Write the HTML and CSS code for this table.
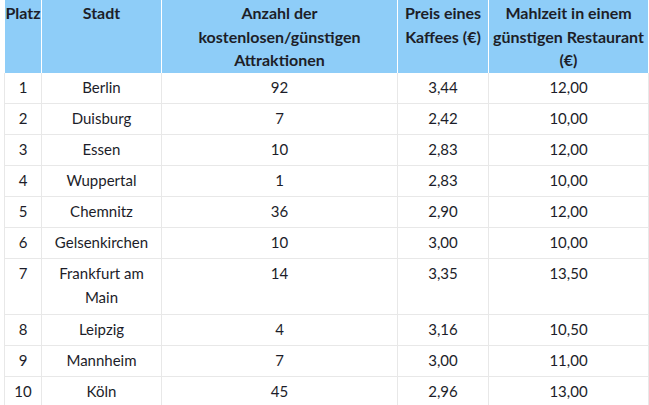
FILE: index.html
```
<!DOCTYPE html>
<html lang="de">
<head>
<meta charset="utf-8">
<title>Städte-Ranking</title>
<link rel="stylesheet" href="styles.css">
</head>
<body>
<table class="ranking">
  <colgroup>
    <col class="c-rank">
    <col class="c-city">
    <col class="c-attr">
    <col class="c-coffee">
    <col class="c-meal">
  </colgroup>
  <thead>
    <tr>
      <th class="rank">Platz</th>
      <th>Stadt</th>
      <th>Anzahl der kostenlosen/günstigen Attraktionen</th>
      <th>Preis eines Kaffees (€)</th>
      <th class="last">Mahlzeit in einem günstigen Restaurant (€)</th>
    </tr>
  </thead>
  <tbody>
    <tr><td class="rank">1</td><td>Berlin</td><td>92</td><td>3,44</td><td class="last">12,00</td></tr>
    <tr><td class="rank">2</td><td>Duisburg</td><td>7</td><td>2,42</td><td class="last">10,00</td></tr>
    <tr><td class="rank">3</td><td>Essen</td><td>10</td><td>2,83</td><td class="last">12,00</td></tr>
    <tr><td class="rank">4</td><td>Wuppertal</td><td>1</td><td>2,83</td><td class="last">10,00</td></tr>
    <tr><td class="rank">5</td><td>Chemnitz</td><td>36</td><td>2,90</td><td class="last">12,00</td></tr>
    <tr><td class="rank">6</td><td>Gelsenkirchen</td><td>10</td><td>3,00</td><td class="last">10,00</td></tr>
    <tr class="tall"><td class="rank">7</td><td>Frankfurt am Main</td><td>14</td><td>3,35</td><td class="last">13,50</td></tr>
    <tr><td class="rank">8</td><td>Leipzig</td><td>4</td><td>3,16</td><td class="last">10,50</td></tr>
    <tr><td class="rank">9</td><td>Mannheim</td><td>7</td><td>3,00</td><td class="last">11,00</td></tr>
    <tr><td class="rank">10</td><td>Köln</td><td>45</td><td>2,96</td><td class="last">13,00</td></tr>
  </tbody>
</table>
</body>
</html>
```

FILE: styles.css
```
html, body {
  margin: 0;
  padding: 0;
  background: #ffffff;
}

body {
  font-family: Lato, "Open Sans", sans-serif;
  color: #1c1d29;
}

.ranking {
  margin: 0 0 0 4px;
  width: 645px;
  table-layout: fixed;
  border-collapse: separate;
  border-spacing: 0;
}

.c-rank { width: 37px; }
.c-city { width: 120px; }
.c-attr { width: 236px; }
.c-coffee { width: 91px; }
.c-meal { width: 161px; }

.ranking th,
.ranking td {
  box-sizing: border-box;
  text-align: center;
  vertical-align: top;
  padding-left: 2px;
  padding-right: 2px;
}

.ranking th {
  background: #8ecdf8;
  font-size: 16px;
  font-weight: 700;
  line-height: 23.5px;
  padding-top: 1px;
  padding-bottom: 1.5px;
  border-left: 1px solid #ffffff;
  color: #1d1e28;
}

.ranking th.last {
  border-right: 1px solid #ffffff;
}

.ranking td {
  font-size: 15px;
  font-weight: 400;
  line-height: 24px;
  padding-top: 2px;
  padding-bottom: 4px;
  border-left: 1px solid #e8e8e8;
  border-bottom: 1px solid #e8e8e8;
}

.ranking td.last {
  border-right: 1px solid #e8e8e8;
}

.ranking .rank {
  padding-left: 0;
  padding-right: 0;
}

.ranking tr.tall td {
  padding-bottom: 5px;
}
```
